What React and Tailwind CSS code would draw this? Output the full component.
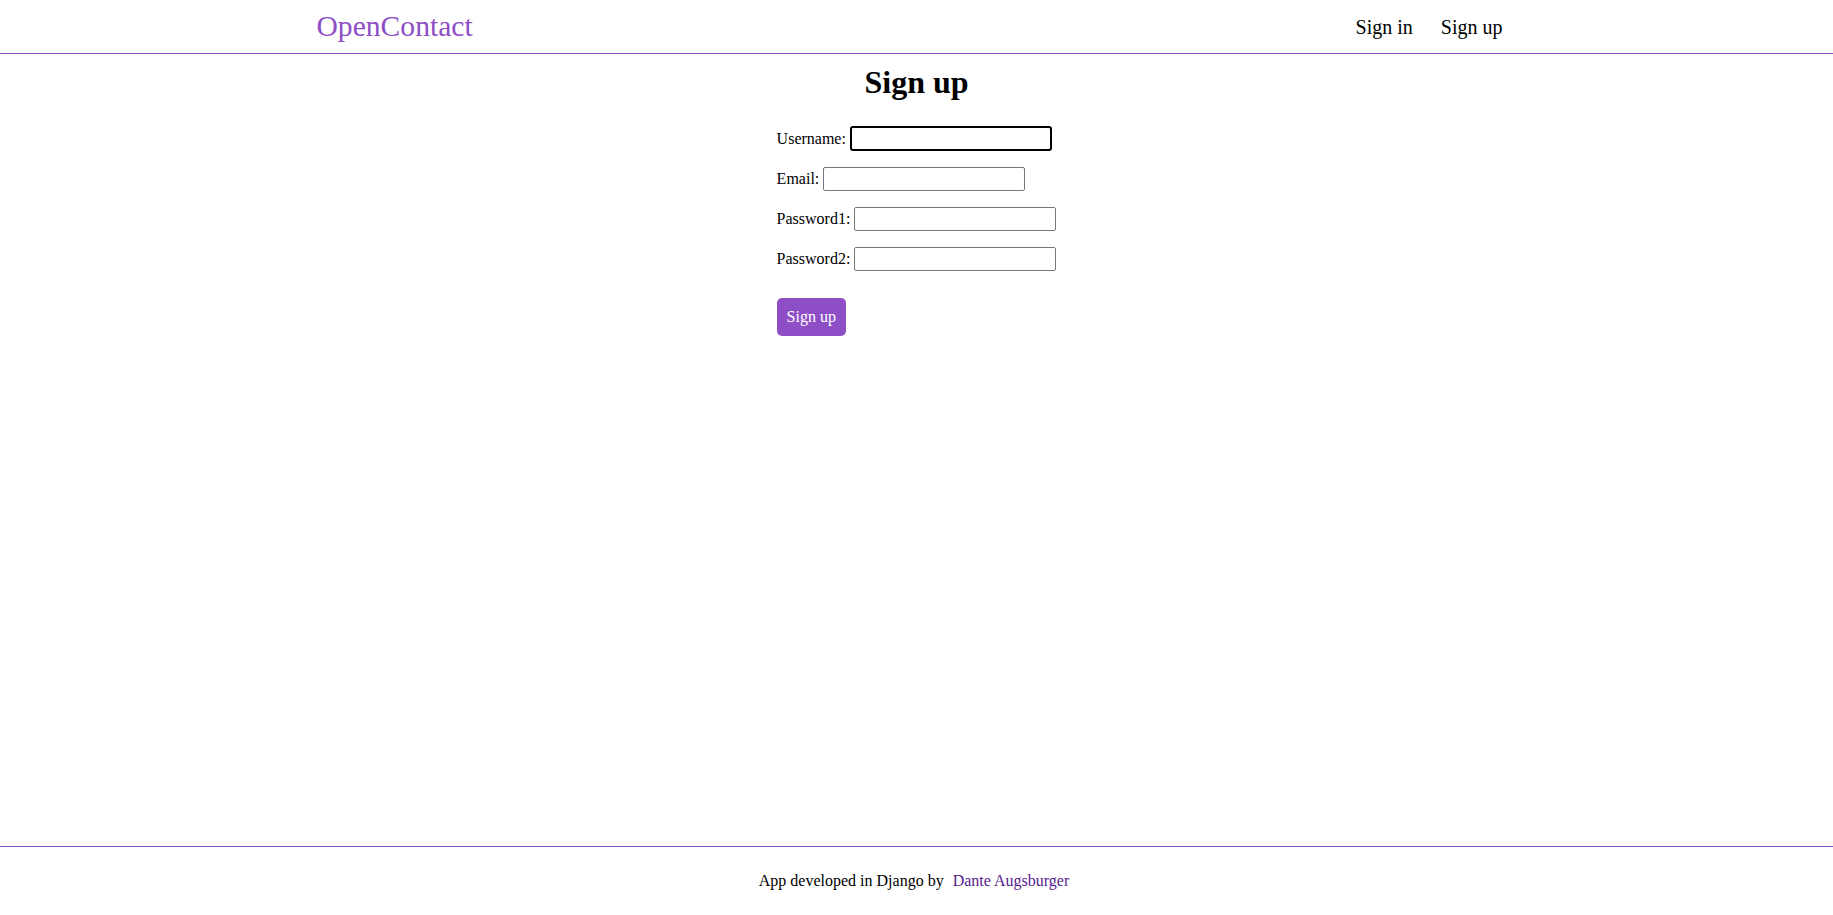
export default function App() {
  const fields = [
    { label: 'Username:', type: 'text', focused: true },
    { label: 'Email:', type: 'email' },
    { label: 'Password1:', type: 'password' },
    { label: 'Password2:', type: 'password' },
  ];

  return (
    <div className="min-h-screen flex flex-col bg-white text-black font-['Liberation_Serif',serif]">
      <header className="border-b border-[#8e4ec6]">
        <div className="max-w-[1200px] mx-auto h-[53px] flex items-center justify-between">
          <a href="#" className="text-[29.6px] text-[#8e4ec6]">OpenContact</a>
          <nav className="flex items-center">
            <a href="#" className="px-[14px] text-[20px]">Sign in</a>
            <a href="#" className="px-[14px] text-[20px]">Sign up</a>
          </nav>
        </div>
      </header>

      <main className="flex-1 flex flex-col items-center">
        <h1 className="mt-[10px] text-[32px] leading-[37px] font-bold">Sign up</h1>
        <form className="mt-[25px] flex flex-col gap-4 text-[16px]">
          {fields.map((f) => (
            <div key={f.label} className={f.focused ? 'h-[25px] flex items-center' : 'h-6 flex items-center'}>
              <label className="mr-1">{f.label}</label>
              <input
                type={f.type}
                className={
                  f.focused
                    ? 'w-[202px] h-[25px] border-2 border-black rounded-[3px] outline-none'
                    : 'w-[202px] h-6 border border-[#767676] rounded-[2px] outline-none'
                }
              />
            </div>
          ))}
          <div className="mt-[11px]">
            <button type="button" className="h-[38px] px-[10px] rounded-[5px] bg-[#8e4ec6] text-white text-[16px]">
              Sign up
            </button>
          </div>
        </form>
      </main>

      <footer className="border-t border-[#8e4ec6] h-[69px] flex items-center justify-center pr-[5px] text-[16px]">
        <span>App developed in Django by</span>
        <a href="#" className="ml-[9px] text-[#551a8b]">Dante Augsburger</a>
      </footer>
    </div>
  );
}
